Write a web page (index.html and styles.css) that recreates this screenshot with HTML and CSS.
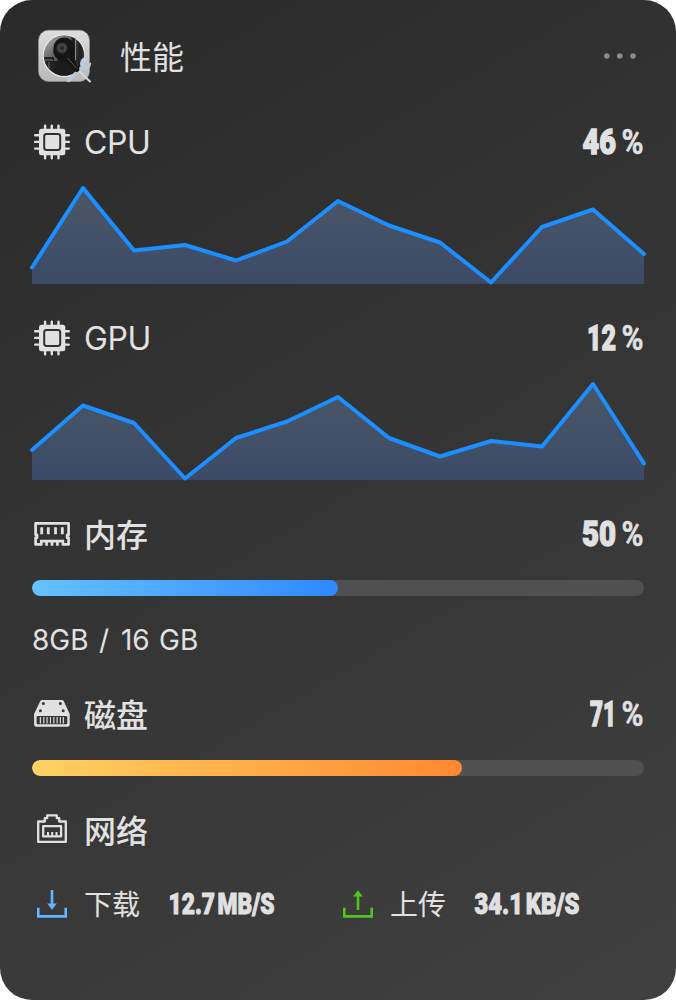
FILE: index.html
```html
<!DOCTYPE html>
<html lang="zh-CN">
<head>
<meta charset="utf-8">
<title>性能</title>
<link rel="stylesheet" href="styles.css">
</head>
<body>
<svg class="defs" width="0" height="0" aria-hidden="true">
  <defs>
    <linearGradient id="area" gradientUnits="userSpaceOnUse" x1="0" y1="16" x2="0" y2="112">
      <stop offset="0" stop-color="#4a5766"/><stop offset="1" stop-color="#3c4a68"/>
    </linearGradient>
    <symbol id="chip" viewBox="0 0 40 40">
      <path d="M13.3 3.8v4M20 3.8v4M26.7 3.8v4M13.3 32.4v4M20 32.4v4M26.7 32.4v4M3.4 13.3h4M3.4 20h4M3.4 26.7h4M33 13.3h4M33 20h4M33 26.7h4" transform="translate(-.2 -.1)" stroke="#e1e1e1" stroke-width="2.4" stroke-linecap="round"/>
      <rect x="7" y="6.8" width="26.3" height="26.4" rx="2.5" fill="#e1e1e1"/>
      <rect x="12.2" y="12" width="16" height="16" rx="2.4" fill="#e1e1e1" stroke="#303030" stroke-width="2"/>
    </symbol>
  </defs>
</svg>
<main class="card">
  <header class="header">
    <svg class="logo" width="64" height="64" viewBox="0 0 64 64">
      <defs>
        <linearGradient id="shell" x1="0" y1="0" x2="0" y2="1"><stop stop-color="#dedede"/><stop offset="1" stop-color="#b8b8b8"/></linearGradient>
        <linearGradient id="lens" x1="0" y1="0" x2="1" y2="1"><stop stop-color="#bbb"/><stop offset=".35" stop-color="#666"/><stop offset="1" stop-color="#151515"/></linearGradient>
        <clipPath id="round"><circle cx="32" cy="31.5" r="20"/></clipPath>
      </defs>
      <rect x="6.5" y="6.2" width="51" height="51.2" rx="10" fill="url(#shell)" stroke="#999" stroke-width=".6"/>
      <circle cx="32" cy="31.7" r="21.3" fill="#eee"/>
      <circle cx="32" cy="31.5" r="20.3" fill="url(#lens)"/>
      <g clip-path="url(#round)">
        <path d="M12 33h10v4h3v16H12z" fill="#222"/>
        <path d="M12 36h9M17 38v10" stroke="#777"/>
        <path d="M42 12v39M48 14v36" stroke="#222" stroke-width="5"/>
        <path d="M43.5 15v21" stroke="#888" stroke-width="1"/>
        <path d="M21.5 24a10.5 10.5 0 0 1 21 0v28h-17V35a11 11 0 0 1-4-11z" fill="#151515"/>
        <circle cx="30" cy="24" r="5.5" fill="#3b3b3b"/>
        <circle cx="30" cy="24" r="3" fill="#292929" stroke="#555"/>
        <path d="M22 38h22v14H22z" fill="#1c1c1c"/>
      </g>
      <path d="M34 56.5L48.5 42.5c-1.5-4.5 1-9 5-9.5l-2 5 2 3 5.5-2.5c.5 5-3.5 8.5-7.5 7L37.5 58q-2 1-3.5-1.5z" fill="#b9cbd7"/>
      <path d="M46 46L58 57.5" stroke="#d0dbe1" stroke-width="2" stroke-linecap="round"/>
      <path d="M36 35.5l9 10" stroke="#151515" stroke-width="5" stroke-linecap="round"/>
      <path d="M35.5 34l9 10" stroke="#777" stroke-width=".7"/>
    </svg>
    <h1 class="title">性能</h1>
    <svg class="more" width="40" height="12" viewBox="0 0 40 12"><g fill="#8c8c8c"><circle cx="6.8" cy="6" r="2.8"/><circle cx="19.8" cy="6" r="2.8"/><circle cx="33" cy="6" r="2.8"/></g></svg>
  </header>

  <section>
    <div class="row">
      <svg class="icon"><use href="#chip"/></svg>
      <span class="label latin">CPU</span>
      <svg class="value" width="80" height="44"><text class="heavy" x="18.5" y="34" textLength="33.5" lengthAdjust="spacingAndGlyphs">46</text><text class="heavy percent" x="57.5" y="34" textLength="22" lengthAdjust="spacingAndGlyphs">%</text></svg>
    </div>
    <svg class="chart" viewBox="0 0 612 112">
      <path d="M0 95.5L51 16L102 78.5L153 73L204 88.5L255 69.5L306 29L357 53.5L408 70.5L459 110.5L510 55L561 37.5L612 82V112H0z" fill="url(#area)"/>
      <polyline class="line" points="0,95.5 51,16 102,78.5 153,73 204,88.5 255,69.5 306,29 357,53.5 408,70.5 459,110.5 510,55 561,37.5 612,82"/>
    </svg>
  </section>

  <section class="section">
    <div class="row">
      <svg class="icon"><use href="#chip"/></svg>
      <span class="label latin">GPU</span>
      <svg class="value" width="80" height="44"><text class="heavy" x="23" y="34" textLength="29" lengthAdjust="spacingAndGlyphs">12</text><text class="heavy percent" x="57.5" y="34" textLength="22" lengthAdjust="spacingAndGlyphs">%</text></svg>
    </div>
    <svg class="chart" viewBox="0 0 612 112">
      <path d="M0 82L51 37.5L102 55L153 110.5L204 70L255 53.5L306 29L357 70L408 88.5L459 73L510 78.5L561 16L612 95.5V112H0z" fill="url(#area)"/>
      <polyline class="line" points="0,82 51,37.5 102,55 153,110.5 204,70 255,53.5 306,29 357,70 408,88.5 459,73 510,78.5 561,16 612,95.5"/>
    </svg>
  </section>

  <section class="section">
    <div class="row">
      <svg class="icon" viewBox="0 0 40 40" fill="none" stroke="#e1e1e1">
        <path d="M9.2 30.4H3.6v-6.6h1.4v-3H3.6V9.3h33v11.5h-1.4v3h1.4v6.6H31" stroke-width="2.7" stroke-linejoin="round"/>
        <path d="M9.7 13.2v7M16.3 13.2v7M23.5 13.2v7M30.3 13.2v7" stroke-width="2.8"/>
        <path d="M8 27.2h24M9.3 26v5.6M14.6 27v4.7M20 27v4.7M25.4 27v4.7M30.9 26v5.6" stroke-width="2.7"/>
      </svg>
      <span class="label">内存</span>
      <svg class="value" width="80" height="44"><text class="heavy" x="18" y="34" textLength="34" lengthAdjust="spacingAndGlyphs">50</text><text class="heavy percent" x="57.5" y="34" textLength="22" lengthAdjust="spacingAndGlyphs">%</text></svg>
    </div>
    <div class="track"><div class="fill memory" style="width:50%"></div></div>
    <p class="detail">8GB <span class="slash">/</span> 16 GB</p>
  </section>

  <section class="section">
    <div class="row">
      <svg class="icon" viewBox="0 0 40 40">
        <path d="M10.2 6h19.6q1.4 0 2 1.2L37.7 20v10.4q0 2.3-2.3 2.3H4.4q-2.3 0-2.3-2.3V20L8.2 7.2Q8.8 6 10.2 6z" fill="#e1e1e1"/>
        <rect x="4.6" y="22" width="30.7" height="8.3" rx="1.2" fill="#373737"/>
        <path d="M8.4 23v6.4M11.8 23v6.4M15.1 23v6.4M18.4 23v6.4M21.8 23v6.4M25.1 23v6.4M28.4 23v6.4M31.4 23v6.4" stroke="#d8d8d8" stroke-width="1.2"/>
        <g fill="#373737"><circle cx="11.4" cy="9.4" r="1.5"/><circle cx="28.3" cy="9.4" r="1.5"/><circle cx="8.4" cy="16.7" r="1.5"/><circle cx="31.2" cy="16.7" r="1.5"/></g>
      </svg>
      <span class="label">磁盘</span>
      <svg class="value" width="80" height="44"><text class="heavy" x="26" y="34" textLength="26" lengthAdjust="spacingAndGlyphs">71</text><text class="heavy percent" x="57.5" y="34" textLength="22" lengthAdjust="spacingAndGlyphs">%</text></svg>
    </div>
    <div class="track"><div class="fill disk" style="width:70.25%"></div></div>
  </section>

  <section class="section">
    <div class="row">
      <svg class="icon" viewBox="0 0 40 40" fill="none" stroke="#e1e1e1" stroke-width="2.3" stroke-linejoin="round">
        <path d="M6.2 11.5h6.6V8.2h2.4V5.4h9.6v2.8h2.4v3.3h6.6v20.3H6.2z"/>
        <path d="M11.2 16.2h17.9v10.2H11.2z"/>
        <path d="M16 22v4.5M20.2 22v4.5M24.5 22v4.5" stroke-width="2"/>
      </svg>
      <span class="label">网络</span>
    </div>
    <div class="traffic">
      <div class="flow">
        <svg class="icon" viewBox="0 0 40 40"><path d="M6.3 23.8v8.6h27.4v-8.6M20 6v16" fill="none" stroke="#62b6fd" stroke-width="2.6"/><path d="M15.2 19.5h9.6L20 25.7z" fill="#62b6fd"/></svg>
        <span class="caption">下载</span>
        <svg class="rate" width="120" height="44"><text class="heavy small" x="0.5" y="32" textLength="106" lengthAdjust="spacingAndGlyphs">12.7 MB/S</text></svg>
      </div>
      <div class="flow">
        <svg class="icon" viewBox="0 0 40 40"><path d="M6.3 23.8v8.6h27.4v-8.6M20 26V10" fill="none" stroke="#50c51c" stroke-width="2.6"/><path d="M15.2 12.5h9.6L20 6.3z" fill="#50c51c"/></svg>
        <span class="caption">上传</span>
        <svg class="rate" width="120" height="44"><text class="heavy small" x="0.5" y="32" textLength="105" lengthAdjust="spacingAndGlyphs">34.1 KB/S</text></svg>
      </div>
    </div>
  </section>
</main>
</body>
</html>
```
FILE: styles.css
```css
* { box-sizing: border-box; }
body { margin: 0; background: #fff; }
svg { display: block; flex: none; }
.defs { position: absolute; }
.card {
  width: 676px;
  height: 1000px;
  padding: 0 32px;
  border-radius: 32px;
  background: linear-gradient(150deg, #2a2a2a, #404040);
  color: #e1e1e1;
  font-family: "Noto Sans CJK SC", sans-serif;
  overflow: hidden;
}
.header { display: flex; align-items: center; height: 112px; }
.title { margin: 0 0 3px 24px; font-size: 32px; line-height: 48px; font-weight: 400; }
.more { margin: 0 4px 0 auto; }
.section { margin-top: 24px; }
.row { display: flex; align-items: center; height: 60px; }
.icon { width: 40px; height: 40px; }
.label { margin: 0 0 3px 12px; font-size: 32px; line-height: 48px; font-weight: 500; }
.latin { margin-top: 2px; margin-bottom: 0; font-family: Inter, sans-serif; font-weight: 400; letter-spacing: -0.4px; }
.value { margin-left: auto; overflow: visible; }
.chart { width: 612px; height: 112px; overflow: visible; }
.line { fill: none; stroke: #1b8fff; stroke-width: 4; stroke-linejoin: round; stroke-linecap: round; }
.heavy { font-family: Roboto, sans-serif; font-weight: 900; font-size: 35px; fill: #e1e1e1; stroke: #e1e1e1; stroke-width: 1.3px; }
.percent { font-weight: 700; stroke-width: 0.5px; }
.small { font-size: 30px; stroke-width: 1px; word-spacing: -4px; }
.track { height: 16px; margin-top: 16px; border-radius: 8px; background: #505050; overflow: hidden; }
.fill { height: 100%; border-radius: 8px; }
.memory { background: linear-gradient(90deg, #64c2ff, #3088ff); }
.disk { background: linear-gradient(90deg, #ffd264, #ff8830); }
.detail { margin: 24px 0 0; height: 40px; font-family: Inter, sans-serif; font-size: 28px; line-height: 40px; white-space: nowrap; word-spacing: 1.5px; }
.slash { margin: 0 2.5px 0 1px; }
.traffic { display: grid; grid-template-columns: 306px 306px; margin-top: 14px; }
.flow { display: flex; align-items: center; height: 60px; }
.caption { margin: 0 0 2px 12px; font-size: 28px; line-height: 40px; }
.rate { margin-left: 28px; overflow: visible; }
```
